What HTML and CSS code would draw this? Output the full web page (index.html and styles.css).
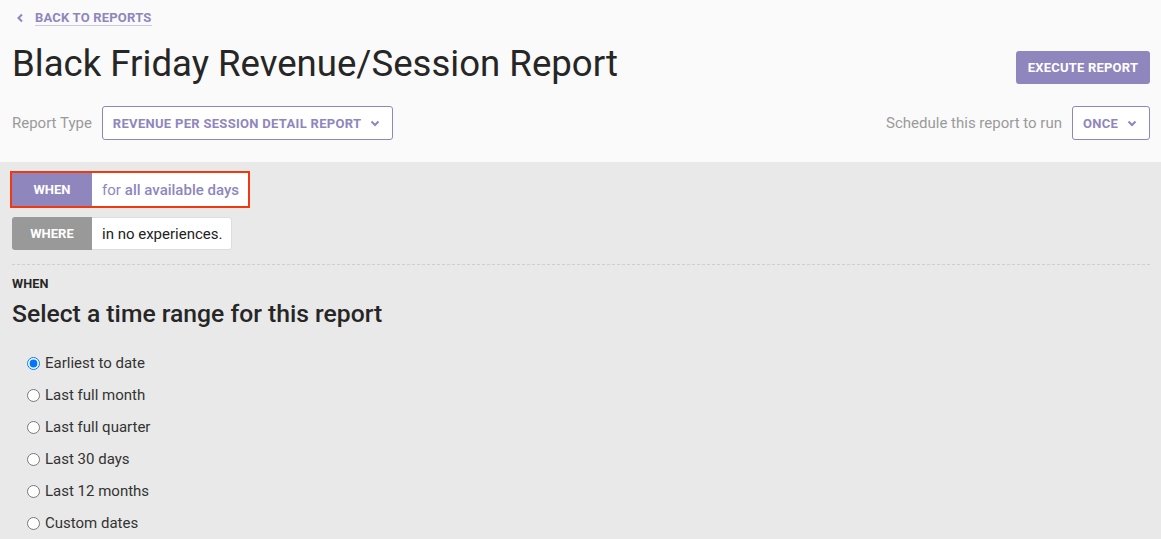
FILE: index.html
```html
<!DOCTYPE html>
<html>
<head>
<meta charset="utf-8">
<link rel="stylesheet" href="styles.css">
</head>
<body>
<header class="top">
  <a class="back" href="#"><svg class="back-ico" width="8" height="10" viewBox="0 0 8 10"><path d="M6 1.5 L2.5 5 L6 8.5" fill="none" stroke="#8f86be" stroke-width="2"/></svg><span class="back-text">BACK TO REPORTS</span></a>
  <div class="title-row">
    <h1 class="title">Black Friday Revenue/Session Report</h1>
    <button class="exec">EXECUTE REPORT</button>
  </div>
  <div class="opts-row">
    <div class="opt">
      <span class="opt-label">Report Type</span>
      <div class="select select-type">REVENUE PER SESSION DETAIL REPORT <svg class="chev" width="10" height="7" viewBox="0 0 10 7"><path d="M1.5 1.5 L5 5 L8.5 1.5" fill="none" stroke="#8f86be" stroke-width="2"/></svg></div>
    </div>
    <div class="opt">
      <span class="opt-label">Schedule this report to run</span>
      <div class="select select-once">ONCE <svg class="chev" width="10" height="7" viewBox="0 0 10 7"><path d="M1.5 1.5 L5 5 L8.5 1.5" fill="none" stroke="#8f86be" stroke-width="2"/></svg></div>
    </div>
  </div>
</header>
<main class="body">
  <div class="pills">
    <div class="pill-wrap active">
      <div class="pill">
        <span class="pill-tag tag-when">WHEN</span>
        <span class="pill-val val-when">for <b>all available days</b></span>
      </div>
    </div>
    <div class="pill-wrap">
      <div class="pill">
        <span class="pill-tag tag-where">WHERE</span>
        <span class="pill-val val-where">in no experiences.</span>
      </div>
    </div>
  </div>
  <hr class="dash">
  <div class="section-label">WHEN</div>
  <h2 class="section-title">Select a time range for this report</h2>
  <ul class="radios">
    <li><label><input type="radio" name="r" checked> Earliest to date</label></li>
    <li><label><input type="radio" name="r"> Last full month</label></li>
    <li><label><input type="radio" name="r"> Last full quarter</label></li>
    <li><label><input type="radio" name="r"> Last 30 days</label></li>
    <li><label><input type="radio" name="r"> Last 12 months</label></li>
    <li><label><input type="radio" name="r"> Custom dates</label></li>
  </ul>
</main>
</body>
</html>
```
FILE: styles.css
```css
* { box-sizing: border-box; }
html, body { margin: 0; padding: 0; }
body {
  font-family: Roboto, "Liberation Sans", sans-serif;
  background: #e9e9e9;
  color: #222;
  width: 1161px;
  height: 539px;
  overflow: hidden;
}
.top {
  background: #fafafa;
  padding: 8px 11px 22px 12px;
  height: 162px;
}
.back {
  display: inline-flex;
  align-items: center;
  text-decoration: none;
  margin-left: 4px;
  height: 17px;
}
.back-ico { margin-right: 11px; }
.back-text {
  color: #8f86be;
  font-size: 13px;
  font-weight: 700;
  letter-spacing: 0.2px;
  border-bottom: 1px solid #cdc8e4;
  line-height: 15px;
}
.title-row {
  display: flex;
  justify-content: space-between;
  align-items: flex-start;
  margin-top: 16px;
}
.title {
  margin: 0;
  font-size: 36.6px;
  font-weight: 400;
  line-height: 42px;
  color: #262626;
}
.exec {
  margin-top: 8px;
  background: #8f86be;
  color: #fff;
  border: 0;
  border-radius: 3px;
  font-family: inherit;
  font-weight: 700;
  font-size: 13px;
  height: 33px;
  width: 134px;
  padding: 0;
  letter-spacing: 0.2px;
}
.opts-row {
  display: flex;
  justify-content: space-between;
  margin-top: 21px;
}
.opt { display: flex; align-items: center; }
.opt-label {
  color: #9a9a9a;
  font-size: 15px;
  margin-right: 10px;
}
.select {
  display: flex;
  align-items: center;
  height: 34px;
  border: 1px solid #8f86be;
  border-radius: 3px;
  background: #fff;
  color: #8f86be;
  font-size: 13px;
  font-weight: 700;
  letter-spacing: 0.3px;
  padding: 0 10px;
}
.select-type { width: 291px; }
.select-once { width: 78px; }
.chev { margin-left: 9px; }
.body { padding: 9px 11px 0 12px; }
.pills { display: flex; flex-direction: column; align-items: flex-start; gap: 9px; }
.pill-wrap {
  border: 2px solid transparent;
  margin-left: -2px;
}
.pill-wrap.active { border-color: #f2380f; }
.pill-wrap + .pill-wrap { margin-top: -2px; }
.pill { display: flex; height: 33px; border-radius: 3px; overflow: hidden; }
.pill-wrap.active .pill { border-radius: 0; }
.pill-tag {
  width: 80px;
  display: flex;
  align-items: center;
  justify-content: center;
  color: #fff;
  font-size: 13px;
  font-weight: 700;
}
.tag-when { background: #8f86be; }
.tag-where { background: #999; }
.pill-val {
  background: #fff;
  display: flex;
  align-items: center;
  padding: 0 10px;
  font-size: 15px;
}
.val-when { color: #8f86be; padding-right: 9px; }
.val-when b { font-weight: 500; margin-left: 4px; }
.val-where { color: #222; border: 1px solid #ddd; border-left: 0; border-radius: 0 3px 3px 0; padding-right: 9px; }
.dash {
  border: 0;
  border-top: 1px dashed #cfcfcf;
  margin: 12px 0 0 0;
  height: 0;
}
.section-label {
  margin-top: 11px;
  font-size: 12.7px;
  font-weight: 700;
  color: #262626;
  letter-spacing: 0.1px;
}
.section-title {
  margin: 7px 0 0 0;
  font-size: 24.7px;
  font-weight: 500;
  line-height: 32px;
  color: #262626;
}
.radios {
  list-style: none;
  margin: 17px 0 0 0;
  padding: 0 0 0 14px;
}
.radios li { height: 32px; display: flex; align-items: center; }
.radios label { display: flex; align-items: center; font-size: 15px; color: #333; }
.radios input { margin: 0 5px 0 1px; width: 13px; height: 13px; }
```
